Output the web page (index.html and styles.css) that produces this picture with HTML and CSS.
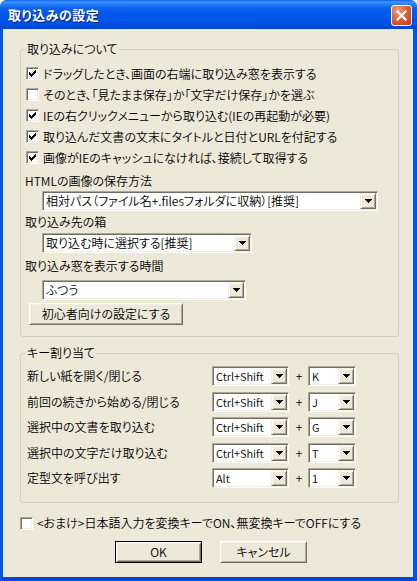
FILE: index.html
```html
<!DOCTYPE html>
<html lang="ja">
<head>
<meta charset="utf-8">
<title>取り込みの設定</title>
<link rel="stylesheet" href="styles.css">
</head>
<body>
<div class="window">
  <div class="titlebar">
    <span class="title">取り込みの設定</span>
    <span class="close"><svg width="11" height="11" viewBox="0 0 11 11"><path d="M1.5 1.5 L9.5 9.5 M9.5 1.5 L1.5 9.5" stroke="#fff" stroke-width="2.2" stroke-linecap="square"/></svg></span>
  </div>
  <div class="client">
    <fieldset class="group g1">
      <legend>取り込みについて</legend>
      <div class="check-row"><span class="cb"><svg class="tick" width="7" height="7" viewBox="0 0 7 7"><path d="M6 0h1v1h-1z M5 1h2v1h-2z M0 2h1v1h-1z M4 2h3v1h-3z M0 3h2v1h-2z M3 3h3v1h-3z M0 4h5v1h-5z M1 5h3v1h-3z M2 6h1v1h-1z"/></svg></span><span>ドラッグしたとき、画面の右端に取り込み窓を表示する</span></div>
      <div class="check-row"><span class="cb"></span><span>そのとき、「見たまま保存」か「文字だけ保存」かを選ぶ</span></div>
      <div class="check-row"><span class="cb"><svg class="tick" width="7" height="7" viewBox="0 0 7 7"><path d="M6 0h1v1h-1z M5 1h2v1h-2z M0 2h1v1h-1z M4 2h3v1h-3z M0 3h2v1h-2z M3 3h3v1h-3z M0 4h5v1h-5z M1 5h3v1h-3z M2 6h1v1h-1z"/></svg></span><span>IEの右クリックメニューから取り込む(IEの再起動が必要)</span></div>
      <div class="check-row"><span class="cb"><svg class="tick" width="7" height="7" viewBox="0 0 7 7"><path d="M6 0h1v1h-1z M5 1h2v1h-2z M0 2h1v1h-1z M4 2h3v1h-3z M0 3h2v1h-2z M3 3h3v1h-3z M0 4h5v1h-5z M1 5h3v1h-3z M2 6h1v1h-1z"/></svg></span><span>取り込んだ文書の文末にタイトルと日付とURLを付記する</span></div>
      <div class="check-row"><span class="cb"><svg class="tick" width="7" height="7" viewBox="0 0 7 7"><path d="M6 0h1v1h-1z M5 1h2v1h-2z M0 2h1v1h-1z M4 2h3v1h-3z M0 3h2v1h-2z M3 3h3v1h-3z M0 4h5v1h-5z M1 5h3v1h-3z M2 6h1v1h-1z"/></svg></span><span>画像がIEのキャッシュになければ、接続して取得する</span></div>

      <div class="label l1">HTMLの画像の保存方法</div>
      <div class="combo c1"><span class="combo-text">相対パス（ファイル名+.filesフォルダに収納）[推奨]</span><span class="drop"><svg width="7" height="4" viewBox="0 0 7 4"><path d="M0 0h7v1h-7z M1 1h5v1h-5z M2 2h3v1h-3z M3 3h1v1h-1z"/></svg></span></div>

      <div class="label l2">取り込み先の箱</div>
      <div class="combo c2"><span class="combo-text">取り込む時に選択する[推奨]</span><span class="drop"><svg width="7" height="4" viewBox="0 0 7 4"><path d="M0 0h7v1h-7z M1 1h5v1h-5z M2 2h3v1h-3z M3 3h1v1h-1z"/></svg></span></div>

      <div class="label l3">取り込み窓を表示する時間</div>
      <div class="combo c3"><span class="combo-text">ふつう</span><span class="drop"><svg width="7" height="4" viewBox="0 0 7 4"><path d="M0 0h7v1h-7z M1 1h5v1h-5z M2 2h3v1h-3z M3 3h1v1h-1z"/></svg></span></div>

      <div class="btn beginner">初心者向けの設定にする</div>
    </fieldset>

    <fieldset class="group g2">
      <legend>キー割り当て</legend>
      <div class="keygrid">
        <span class="klabel">新しい紙を開く/閉じる</span>
        <div class="combo mod"><span class="combo-text">Ctrl+Shift</span><span class="drop"><svg width="7" height="4" viewBox="0 0 7 4"><path d="M0 0h7v1h-7z M1 1h5v1h-5z M2 2h3v1h-3z M3 3h1v1h-1z"/></svg></span></div>
        <span class="plus">+</span>
        <div class="combo key"><span class="combo-text">K</span><span class="drop"><svg width="7" height="4" viewBox="0 0 7 4"><path d="M0 0h7v1h-7z M1 1h5v1h-5z M2 2h3v1h-3z M3 3h1v1h-1z"/></svg></span></div>

        <span class="klabel">前回の続きから始める/閉じる</span>
        <div class="combo mod"><span class="combo-text">Ctrl+Shift</span><span class="drop"><svg width="7" height="4" viewBox="0 0 7 4"><path d="M0 0h7v1h-7z M1 1h5v1h-5z M2 2h3v1h-3z M3 3h1v1h-1z"/></svg></span></div>
        <span class="plus">+</span>
        <div class="combo key"><span class="combo-text">J</span><span class="drop"><svg width="7" height="4" viewBox="0 0 7 4"><path d="M0 0h7v1h-7z M1 1h5v1h-5z M2 2h3v1h-3z M3 3h1v1h-1z"/></svg></span></div>

        <span class="klabel">選択中の文書を取り込む</span>
        <div class="combo mod"><span class="combo-text">Ctrl+Shift</span><span class="drop"><svg width="7" height="4" viewBox="0 0 7 4"><path d="M0 0h7v1h-7z M1 1h5v1h-5z M2 2h3v1h-3z M3 3h1v1h-1z"/></svg></span></div>
        <span class="plus">+</span>
        <div class="combo key"><span class="combo-text">G</span><span class="drop"><svg width="7" height="4" viewBox="0 0 7 4"><path d="M0 0h7v1h-7z M1 1h5v1h-5z M2 2h3v1h-3z M3 3h1v1h-1z"/></svg></span></div>

        <span class="klabel">選択中の文字だけ取り込む</span>
        <div class="combo mod"><span class="combo-text">Ctrl+Shift</span><span class="drop"><svg width="7" height="4" viewBox="0 0 7 4"><path d="M0 0h7v1h-7z M1 1h5v1h-5z M2 2h3v1h-3z M3 3h1v1h-1z"/></svg></span></div>
        <span class="plus">+</span>
        <div class="combo key"><span class="combo-text">T</span><span class="drop"><svg width="7" height="4" viewBox="0 0 7 4"><path d="M0 0h7v1h-7z M1 1h5v1h-5z M2 2h3v1h-3z M3 3h1v1h-1z"/></svg></span></div>

        <span class="klabel">定型文を呼び出す</span>
        <div class="combo mod"><span class="combo-text">Alt</span><span class="drop"><svg width="7" height="4" viewBox="0 0 7 4"><path d="M0 0h7v1h-7z M1 1h5v1h-5z M2 2h3v1h-3z M3 3h1v1h-1z"/></svg></span></div>
        <span class="plus">+</span>
        <div class="combo key"><span class="combo-text">1</span><span class="drop"><svg width="7" height="4" viewBox="0 0 7 4"><path d="M0 0h7v1h-7z M1 1h5v1h-5z M2 2h3v1h-3z M3 3h1v1h-1z"/></svg></span></div>
      </div>
    </fieldset>

    <div class="check-row bonus"><span class="cb"></span><span>&lt;おまけ&gt;日本語入力を変換キーでON、無変換キーでOFFにする</span></div>

    <div class="buttons">
      <div class="btn default">OK</div>
      <div class="btn">キャンセル</div>
    </div>
  </div>
</div>
</body>
</html>
```
FILE: styles.css
```css
html, body {
  margin: 0;
  padding: 0;
  background: #ffffff;
}
body {
  font-family: "Noto Sans CJK JP", "Noto Sans", sans-serif;
  font-size: 12px;
  line-height: 14px;
  font-weight: 350;
  color: #000;
  font-feature-settings: "palt";
}
.window {
  width: 417px;
  height: 581px;
  display: flex;
  flex-direction: column;
}
.titlebar {
  height: 29px;
  flex: none;
  display: flex;
  align-items: center;
  justify-content: space-between;
  padding: 0 5px 0 8px;
  box-sizing: border-box;
  background: linear-gradient(to bottom, #0a5eec 0px, #3d95ff 2px, #2a80fa 4px, #0f63ea 8px, #0058ee 14px, #0053e4 22px, #004bd8 27px, #0042c9 29px);
  border-radius: 6px 6px 0 0;
}
.title {
  color: #fff;
  font-weight: bold;
  font-size: 13px;
  letter-spacing: 0.5px;
  text-shadow: 1px 1px 0 #0a1e7a;
  padding-top: 1px;
}
.close {
  width: 21px;
  height: 21px;
  box-sizing: border-box;
  border: 1px solid #fff;
  border-radius: 3px;
  background: radial-gradient(circle at 30% 25%, #f0a085 0%, #e0653f 40%, #c23c18 100%);
  display: flex;
  align-items: center;
  justify-content: center;
  margin-top: 2px;
}
.client {
  flex: 1;
  background: #ece9d8;
  border-left: 3px solid #0055e5;
  border-right: 4px solid #0055e5;
  border-bottom: 4px solid #0048d5;
  padding: 13px 14px 0 17px;
  display: flex;
  flex-direction: column;
}
.group {
  margin: 0;
  border: 1px solid #d0d0bf;
  border-radius: 3px;
  padding: 7px 5px 11px 5px;
  min-width: 0;
}
.group legend {
  padding: 0 1px;
  line-height: 14px;
}
.g2 {
  margin-top: 9px;
  padding: 6px 5px 14px 5px;
}
.check-row {
  display: flex;
  align-items: center;
  gap: 4px;
  height: 21px;
  white-space: nowrap;
}
.cb {
  width: 13px;
  height: 13px;
  box-sizing: border-box;
  flex: none;
  background: #fff;
  border: 1px solid;
  border-color: #aca899 #ffffff #ffffff #aca899;
  box-shadow: inset 1px 1px #716f64, inset -1px -1px #f1efe2;
  display: flex;
  align-items: center;
  justify-content: center;
}
.tick {
  display: block;
  fill: #000;
}
.label {
  margin-left: -1px;
  height: 14px;
  white-space: nowrap;
}
.l1 { margin-top: 6px; }
.l2 { margin-top: 4px; }
.l3 { margin-top: 6px; }
.combo {
  height: 20px;
  box-sizing: border-box;
  background: #fff;
  border: 1px solid;
  border-color: #aca899 #ffffff #ffffff #aca899;
  box-shadow: inset 1px 1px #716f64, inset -1px -1px #f1efe2;
  display: flex;
  align-items: stretch;
  padding: 1px;
}
.combo-text {
  flex: 1;
  padding-left: 2px;
  line-height: 16px;
  white-space: nowrap;
  overflow: hidden;
}
.keygrid .combo-text {
  font-size: 11px;
}
.drop {
  width: 16px;
  flex: none;
  box-sizing: border-box;
  background: #ece9d8;
  border: 1px solid;
  border-color: #f1efe2 #716f64 #716f64 #f1efe2;
  box-shadow: inset 1px 1px #ffffff, inset -1px -1px #aca899;
  display: flex;
  align-items: center;
  justify-content: center;
}
.drop svg {
  display: block;
  fill: #000;
}
.g1 .combo { margin-left: 16px; }
.c1 { width: 336px; margin-top: 3px; }
.c2 { width: 210px; margin-top: 4px; }
.c3 { width: 204px; margin-top: 7px; }
.btn {
  height: 22px;
  box-sizing: border-box;
  background: #ece9d8;
  border: 1px solid;
  border-color: #ffffff #716f64 #716f64 #ffffff;
  box-shadow: inset 1px 1px #f1efe2, inset -1px -1px #aca899;
  display: flex;
  align-items: center;
  justify-content: center;
  white-space: nowrap;
}
.beginner {
  width: 154px;
  margin-left: 3px;
  margin-top: 3px;
}
.keygrid {
  display: grid;
  grid-template-columns: 185px 77px 19px 48px;
  grid-auto-rows: 20px;
  row-gap: 5.5px;
  align-items: center;
  margin-left: 1px;
}
.klabel {
  white-space: nowrap;
}
.plus {
  text-align: center;
  padding-left: 1px;
}
.bonus {
  margin-top: 13px;
  height: 14px;
}
.buttons {
  margin-top: 11px;
  display: flex;
  justify-content: center;
  gap: 18px;
  padding-left: 3px;
}
.buttons .btn {
  width: 87px;
}
.btn.default {
  border-color: #000;
  box-shadow: inset 1px 1px #ffffff, inset -1px -1px #716f64, inset 2px 2px #f1efe2, inset -2px -2px #aca899;
}
```
